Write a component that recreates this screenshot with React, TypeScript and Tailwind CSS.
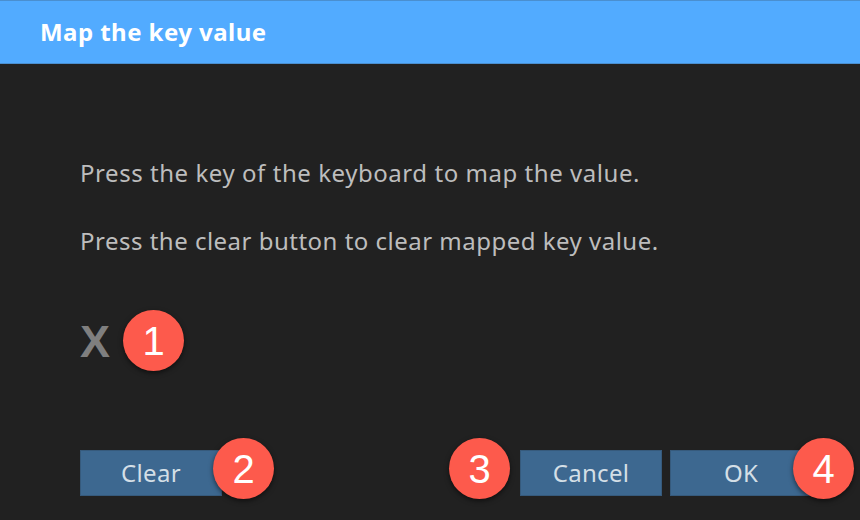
const textFont = "font-['Noto_Sans','Open_Sans',sans-serif]";

function Badge({ n, className }: { n: number; className: string }) {
  return (
    <span
      className={`absolute flex size-[61px] items-center justify-center rounded-full bg-[#fd5a4c] font-['Liberation_Sans',sans-serif] text-[40px] text-white shadow-[0_2px_5px_rgba(0,0,0,0.55)] ${className}`}
    >
      {n}
    </span>
  );
}

function DialogButton({ label }: { label: string }) {
  return (
    <button
      type="button"
      className="h-[46px] w-[142px] border border-[#365a7c] bg-[#3d6890] text-[24px] tracking-[0.3px] text-[#d4dfe6]"
    >
      {label}
    </button>
  );
}

export default function App() {
  return (
    <div className={`flex h-[520px] w-[860px] flex-col overflow-hidden bg-[#212121] ${textFont}`}>
      <header className="flex h-[64px] shrink-0 items-center border-y border-[#4a8fd0] bg-[#52abff] pl-[40px] text-[24px] font-bold tracking-[0.45px] text-white">
        Map the key value
      </header>
      <main className="relative flex flex-1 flex-col pl-[80px]">
        <p className="mt-[92px] h-[34px] text-[24px] leading-[34px] tracking-[0.55px] text-[#bdbdbd]">
          Press the key of the keyboard to map the value.
        </p>
        <p className="mt-[34px] h-[34px] text-[24px] leading-[34px] tracking-[0.49px] text-[#bdbdbd]">
          Press the clear button to clear mapped key value.
        </p>
        <div className="mt-[59px] h-[50px] font-['Liberation_Sans',sans-serif] text-[45px] leading-[50px] font-bold text-[#7f7f7f]">
          X
        </div>
        <div className="mt-[83px] flex pr-[48px]">
          <DialogButton label="Clear" />
          <div className="ml-auto flex gap-2">
            <DialogButton label="Cancel" />
            <DialogButton label="OK" />
          </div>
        </div>
        <Badge n={1} className="top-[246px] left-[123px]" />
        <Badge n={2} className="top-[374px] left-[213px]" />
        <Badge n={3} className="top-[374px] left-[449px]" />
        <Badge n={4} className="top-[374px] left-[793px]" />
      </main>
    </div>
  );
}
